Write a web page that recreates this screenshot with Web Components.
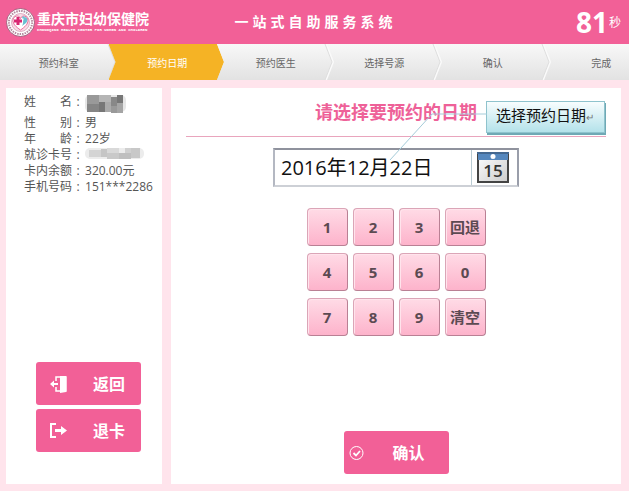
<!DOCTYPE html>
<html lang="zh-CN">
<head>
<meta charset="utf-8">
<meta name="viewport" content="width=device-width, initial-scale=1">
<title>一站式自助服务系统</title>
<style>
    body {
        margin: 0;
        font-family: "Open Sans", "Noto Sans CJK SC", sans-serif;
        color: #555;
        --pink: #f26097;
        --pale: #ffe4ec;
    }
</style>
</head>
<body>
<kiosk-app></kiosk-app>

<script>
// Attach an open shadow root and fill it from a markup string
function render(host, html) {
    const template = document.createElement("template");
    template.innerHTML = html;
    host.attachShadow({ mode: "open" }).appendChild(template.content.cloneNode(true));
}

class KioskHeader extends HTMLElement {
    constructor() {
        super();
        render(this, `
            <style>
            :host {
                display: grid;
                grid-template-columns: 1fr auto 1fr;
                align-items: center;
                height: 44px;
                padding: 0 8px 0 6px;
                background: var(--pink);
                color: white;
            }
            .brand {
                display: flex;
                align-items: center;
                gap: 2px;
            }
            .brand svg {
                flex: none;
                width: 29px;
                height: 29px;
            }
            .name {
                font-size: 14px;
                font-weight: bold;
                line-height: 16px;
                white-space: nowrap;
            }
            .latin {
                font: bold 4px/6px "Liberation Mono", monospace;
                white-space: nowrap;
            }
            h1 {
                margin: 0;
                padding-left: 4px;
                font-size: 14px;
                line-height: 20px;
                letter-spacing: 4px;
            }
            .timer {
                display: flex;
                align-items: center;
                justify-content: flex-end;
                gap: 1px;
                font-size: 12px;
            }
            .timer b {
                font-size: 28px;
                line-height: 32px;
            }
            </style>
            <div class="brand">
                <svg viewBox="0 0 29 29" aria-hidden="true">
                    <circle cx="14.5" cy="14.5" r="14" fill="#fff" stroke="#8d4a68" stroke-width=".8"/>
                    <circle cx="14.5" cy="14.5" r="11.6" fill="none" stroke="#b58ba0" stroke-width="2" stroke-dasharray="1.5 1"/>
                    <circle cx="14.5" cy="14.5" r="9" fill="#f9dce7" stroke="#c9829f" stroke-width=".6"/>
                    <path d="M14.5 22C10 19 7 16 7 12.500c0-5 6-6 7.500-2 1.500-4 7.500-3 7.500 2 0 3.500-3 6.500-7.500 9.500z" fill="#fff" stroke="#e96b9a"/>
                    <path d="M10.500 9h3v2.500H16v3h-2.500V17h-3v-2.500H8v-3h2.500z" fill="#d92772"/>
                    <path d="M19 9c3 1 3 4 1 6l-4 3c2-3 0-6 3-9z" fill="#69bfd2"/>
                    <circle cx="17.500" cy="9.500" r="1.300" fill="#69bfd2"/>
                </svg>
                <div>
                    <div class="name">重庆市妇幼保健院</div>
                    <div class="latin">CHONGQING HEALTH CENTER FOR WOMEN AND CHILDREN</div>
                </div>
            </div>
            <h1><slot></slot></h1>
            <div class="timer"><b></b><span>秒</span></div>
        `);
        this.shadowRoot.querySelector("b").textContent = this.getAttribute("seconds");
    }
}

class StepBar extends HTMLElement {
    constructor() {
        super();
        render(this, `
            <style>
            :host {
                display: flex;
                height: 36px;
                overflow: hidden;
                background: linear-gradient(#f8f8f8, #e2e2e2);
            }
            </style>
            <slot></slot>
        `);
    }
}

class StepItem extends HTMLElement {
    constructor() {
        super();
        render(this, `
            <style>
            :host {
                display: grid;
                grid-template-columns: 1fr 7px;
                flex: none;
                width: 17.25%;
                font-size: 10px;
                color: #666;
            }
            .label {
                display: flex;
                align-items: center;
                justify-content: center;
                padding-left: 16px;
                white-space: nowrap;
            }
            svg {
                width: 7px;
                height: 36px;
                overflow: visible;
            }
            .edge {
                fill: none;
                stroke: #fafafa;
                stroke-width: 2;
            }
            .shade {
                fill: none;
                stroke: #dedede;
            }
            .tip {
                fill: none;
            }
            :host([current]) {
                color: white;
                background: #f5b325;
                clip-path: polygon(0 0, 100% 0, calc(100% + 7px) 50%, 100% 100%, 0 100%, 7px 50%);
            }
            :host([current]) .tip {
                fill: #f5b325;
            }
            :host([current]) .edge,
            :host([current]) .shade,
            :host(:last-of-type) svg {
                display: none;
            }
            </style>
            <div class="label"><span><slot></slot></span></div>
            <svg viewBox="0 0 7 36" aria-hidden="true">
                <path class="tip" d="M7 0l7 18-7 18z"/>
                <path class="edge" d="M7 0l7 18-7 18"/>
                <path class="shade" d="M6 0l7 18-7 18"/>
            </svg>
        `);
    }
}

class KioskPanel extends HTMLElement {
    constructor() {
        super();
        render(this, `
            <style>
            :host {
                display: flex;
                flex-direction: column;
                background: white;
            }
            </style>
            <slot></slot>
        `);
    }
}

class PatientInfo extends HTMLElement {
    constructor() {
        super();
        render(this, `
            <style>
            :host {
                display: block;
                padding: 6px 4px 0 18px;
                font-size: 12px;
                line-height: 16px;
            }
            dl {
                display: grid;
                grid-template-columns: auto 1fr;
                grid-template-rows: 21px;
                grid-auto-rows: 16px;
                column-gap: 1px;
                margin: 0;
                white-space: nowrap;
            }
            dt {
                display: flex;
            }
            dt::after {
                content: ":";
                width: 12px;
                text-align: center;
            }
            dd {
                margin: 0;
            }
            svg {
                display: block;
            }
            </style>
            <dl>
                <dt>姓　　名</dt>
                <dd>
                    <svg width="42" height="20" viewBox="0 0 42 20" role="img" aria-label="已隐藏">
                        <rect x="0" y="1" width="41" height="17" rx="5" fill="#e6e6e6"/>
                        <path d="M2 1h12v9H2z" fill="#999"/><path d="M2 10h12v8H2z" fill="#858585"/>
                        <path d="M14 1h12v7H14z" fill="#b5b5b5"/><path d="M14 8h6v10h-6z" fill="#777"/>
                        <path d="M20 8h6v10h-6z" fill="#aaa"/><path d="M26 3h6v9h-6z" fill="#888"/>
                        <path d="M26 12h6v7h-6z" fill="#999"/><path d="M32 1h6v8h-6z" fill="#777"/>
                        <path d="M32 9h6v10h-6z" fill="#a5a5a5"/>
                    </svg>
                </dd>
                <dt>性　　别</dt><dd>男</dd>
                <dt>年　　龄</dt><dd>22岁</dd>
                <dt>就诊卡号</dt>
                <dd>
                    <svg width="60" height="14" viewBox="0 0 60 14" role="img" aria-label="已隐藏">
                        <rect x="0" y="1" width="59" height="11" rx="5" fill="#ececec"/>
                        <path d="M4 3h12v7H4z" fill="#d4d4d4"/><path d="M16 2h6v8h-6z" fill="#c5c5c5"/>
                        <path d="M22 1h12v5H22z" fill="#d9d9d9"/><path d="M22 6h12v6H22z" fill="#c9c9c9"/>
                        <path d="M34 6h12v6H34z" fill="#bfbfbf"/><path d="M40 1h6v5h-6z" fill="#d0d0d0"/>
                        <path d="M46 1h9v10h-9z" fill="#c8c8c8"/>
                    </svg>
                </dd>
                <dt>卡内余额</dt><dd>320.00元</dd>
                <dt>手机号码</dt><dd>151***2286</dd>
            </dl>
        `);
    }
}

const icons = {
    back: `<path d="M10 2h6v16l-6 1z" fill="#fff"/><path d="M6 7V3h10v14H6v-4" fill="none" stroke="#fff" stroke-width="1.500"/><path d="M0 10l4-3.500V9h4v2H4v2.500z" fill="#fff"/>`,
    exit: `<path d="M6 3H1v13h5" fill="none" stroke="#fff" stroke-width="2"/><path d="M5 8h6V5l6 4.500-6 4.500v-3H5z" fill="#fff"/>`,
    check: `<circle cx="7.500" cy="10" r="6.500" fill="none" stroke="#fff"/><path d="M4.500 10L7 12.500 11 8" fill="none" stroke="#fff" stroke-width="1.800"/>`
};

class ActionButton extends HTMLElement {
    constructor() {
        super();
        const icon = this.getAttribute("icon");
        render(this, `
            <style>
            :host {
                display: block;
                width: 105px;
            }
            button {
                display: grid;
                grid-template-columns: 36px 1fr;
                align-items: center;
                width: 100%;
                height: 43px;
                padding: 0 0 0 5px;
                border: 0;
                border-radius: 3px;
                background: var(--pink);
                color: white;
                font: bold 16px/20px "Open Sans", "Noto Sans CJK SC", sans-serif;
                cursor: pointer;
            }
            svg {
                width: 18px;
                height: 20px;
                justify-self: center;
            }
            :host([icon="check"]) button {
                padding-right: 16px;
            }
            :host([icon="check"]) svg {
                justify-self: start;
            }
            </style>
            <button type="button">
                <svg viewBox="0 0 18 20" aria-hidden="true">${icons[icon]}</svg>
                <span><slot></slot></span>
            </button>
        `);
    }
}

class CallOut extends HTMLElement {
    constructor() {
        super();
        render(this, `
            <style>
            :host {
                display: block;
                box-sizing: border-box;
                padding: 0 10px 0 9px;
                border: 1px solid #8fc3cd;
                background: linear-gradient(#f8fdfe, #b4e2ea);
                box-shadow: 1px 2px 0 #6fa9b5;
                color: #111;
                font: 15px/28px "Liberation Sans", "Noto Sans CJK SC", sans-serif;
                white-space: nowrap;
            }
            svg {
                position: absolute;
                top: 11px;
                right: 100%;
                width: 98px;
                height: 48px;
                pointer-events: none;
            }
            small {
                font-size: 10px;
                color: #777;
            }
            </style>
            <svg viewBox="0 0 98 48" aria-hidden="true">
                <path d="M98 1H43L1 47" fill="none" stroke="#a5ccd9"/>
            </svg>
            <slot></slot><small>↵</small>
        `);
    }
}

class DateField extends HTMLElement {
    constructor() {
        super();
        render(this, `
            <style>
            :host {
                display: grid;
                grid-template-columns: 1fr 46px;
                box-sizing: border-box;
                width: 246px;
                height: 39px;
                border: 2px solid;
                border-color: #8f929d #9a9eaa #cdd0d6 #b4b8c2;
                background: white;
            }
            input {
                min-width: 0;
                padding: 0 6px;
                border: 0;
                background: none;
                color: #111;
                font: 20px/32px "Open Sans", "Noto Sans CJK SC", sans-serif;
            }
            button {
                display: flex;
                align-items: center;
                padding: 0 5px;
                border: 0;
                border-left: 1px solid #b9cbd3;
                background: none;
                cursor: pointer;
            }
            svg {
                width: 32px;
                height: 31px;
            }
            text {
                font: 600 17px "Open Sans", sans-serif;
            }
            </style>
            <input type="text" aria-label="预约日期">
            <button type="button" aria-label="打开日历">
                <svg viewBox="0 0 32 31" aria-hidden="true">
                    <defs><linearGradient id="paper" x2="1" y2="1">
                        <stop stop-color="#fff"/><stop offset="1" stop-color="#ccc"/>
                    </linearGradient></defs>
                    <path d="M1 1h30v29H1z" fill="url(#paper)" stroke="#444" stroke-width="2"/>
                    <path d="M1 1h30v7H1z" fill="#5587bd"/>
                    <path d="M0 1h32" stroke="#446890" stroke-width="2"/>
                    <circle cx="16" cy="4.500" r="2.500" fill="#fff"/>
                    <text x="16" y="25" text-anchor="middle" fill="#333">15</text>
                </svg>
            </button>
        `);
        this.input = this.shadowRoot.querySelector("input");
        this.input.value = this.getAttribute("value");
    }
}

class KeyPad extends HTMLElement {
    constructor() {
        super();
        const keys = ["1", "2", "3", "回退", "4", "5", "6", "0", "7", "8", "9", "清空"];
        render(this, `
            <style>
            :host {
                display: grid;
                grid-template-columns: repeat(4, 41px);
                gap: 7px 5px;
            }
            button {
                height: 38px;
                padding: 0;
                border: 1px solid #b98094;
                border-top-color: #dba5b7;
                border-left-color: #dba5b7;
                border-radius: 4px;
                background: linear-gradient(#ffdbe6, #fdb3cb);
                box-shadow: inset 1px 1px 0 #ffe4ec;
                color: #5c4a52;
                font: bold 15px/20px "Open Sans", "Noto Sans CJK SC", sans-serif;
                cursor: pointer;
            }
            </style>
            ${keys.map((key) => `<button type="button">${key}</button>`).join("")}
        `);
        this.shadowRoot.addEventListener("click", (e) => {
            const button = e.target.closest("button");
            if (!button) return;
            this.dispatchEvent(new CustomEvent("key-press", {
                detail: button.textContent,
                bubbles: true,
                composed: true,
            }));
        });
    }
}

class KioskApp extends HTMLElement {
    constructor() {
        super();
        render(this, `
            <style>
            :host {
                display: flex;
                flex-direction: column;
                min-height: 100vh;
                background: var(--pale);
            }
            main {
                display: grid;
                grid-template-columns: minmax(156px, 26fr) minmax(0, 75fr);
                gap: 9px;
                flex: 1;
                padding: 8px 8px 7px 6px;
            }
            .actions {
                display: flex;
                flex-direction: column;
                align-items: flex-end;
                gap: 4px;
                margin-top: auto;
                padding: 16px 21px 32px 0;
            }
            .booking {
                align-items: center;
                padding: 0 15px 10px;
            }
            .heading {
                position: relative;
                align-self: stretch;
                border-bottom: 1px solid #e9a5bd;
                text-align: center;
            }
            h2 {
                margin: 0;
                color: #ee6198;
                font-size: 18px;
                line-height: 48px;
            }
            call-out {
                position: absolute;
                top: 13px;
                right: 1px;
            }
            date-field {
                margin-top: 11px;
            }
            key-pad {
                margin: 21px 0 24px;
            }
            .confirm {
                margin-top: auto;
            }
            </style>
            <kiosk-header seconds="81">一站式自助服务系统</kiosk-header>
            <step-bar>
                <step-item>预约科室</step-item>
                <step-item current>预约日期</step-item>
                <step-item>预约医生</step-item>
                <step-item>选择号源</step-item>
                <step-item>确认</step-item>
                <step-item>完成</step-item>
            </step-bar>
            <main>
                <kiosk-panel>
                    <patient-info></patient-info>
                    <div class="actions">
                        <action-button icon="back">返回</action-button>
                        <action-button icon="exit">退卡</action-button>
                    </div>
                </kiosk-panel>
                <kiosk-panel class="booking">
                    <div class="heading">
                        <h2>请选择要预约的日期</h2>
                        <call-out>选择预约日期</call-out>
                    </div>
                    <date-field value="2016年12月22日"></date-field>
                    <key-pad></key-pad>
                    <action-button class="confirm" icon="check">确认</action-button>
                </kiosk-panel>
            </main>
        `);
        const field = this.shadowRoot.querySelector("date-field");
        this.addEventListener("key-press", (e) => {
            if (e.detail === "清空") {
                field.input.value = "";
            } else if (e.detail === "回退") {
                field.input.value = field.input.value.slice(0, -1);
            } else {
                field.input.value += e.detail;
            }
        });
    }
}

customElements.define("kiosk-header", KioskHeader);
customElements.define("step-bar", StepBar);
customElements.define("step-item", StepItem);
customElements.define("kiosk-panel", KioskPanel);
customElements.define("patient-info", PatientInfo);
customElements.define("action-button", ActionButton);
customElements.define("call-out", CallOut);
customElements.define("date-field", DateField);
customElements.define("key-pad", KeyPad);
customElements.define("kiosk-app", KioskApp);
</script>
</body>
</html>
